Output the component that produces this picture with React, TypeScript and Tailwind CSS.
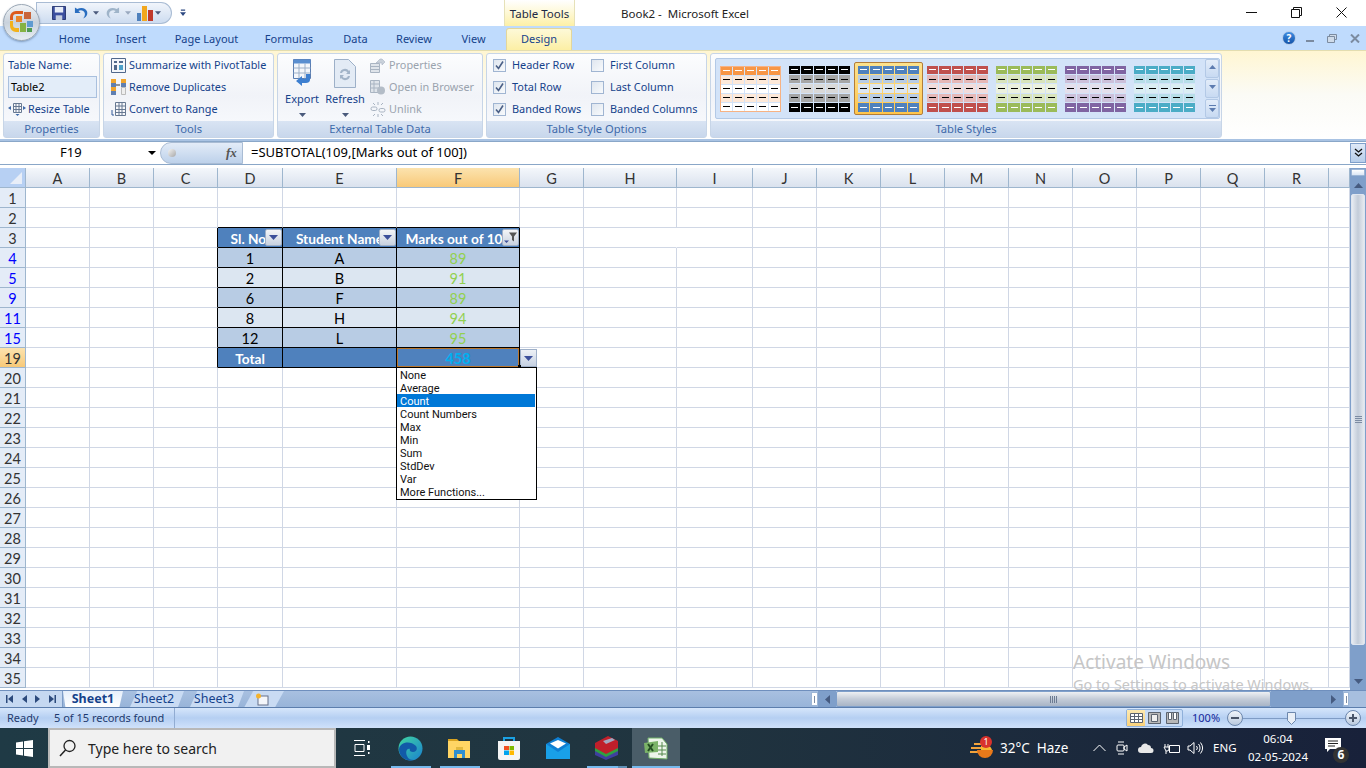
import React from "react";

const seg = "font-['Noto_Sans',sans-serif]";

const cols = ["A","B","C","D","E","F","G","H","I","J","K","L","M","N","O","P","Q","R",""];
const rows = [1,2,3,4,5,9,11,15,19,20,21,22,23,24,25,26,27,28,29,30,31,32,33,34,35];
const filtered = [4,5,9,11,15,19];

type Cell = { t: string; cls: string };
const band1 = "bg-[#b8cce4] text-black";
const band2 = "bg-[#dce6f1] text-black";
const head = "bg-[#4f81bd] text-white font-bold text-[13.7px]";
const mk = (a: string, b: string, c: string, bg: string): Cell[] => [
  { t: a, cls: bg }, { t: b, cls: bg }, { t: c, cls: bg.split(" ")[0] + " text-[#92d050]" },
];
const tableRows: Record<number, Cell[]> = {
  3: [{ t: "Sl. No.", cls: head }, { t: "Student Name", cls: head }, { t: "Marks out of 100", cls: head }],
  4: mk("1", "A", "89", band1),
  5: mk("2", "B", "91", band2),
  9: mk("6", "F", "89", band1),
  11: mk("8", "H", "94", band2),
  15: mk("12", "L", "95", band1),
  19: [{ t: "Total", cls: head }, { t: "", cls: head }, { t: "458", cls: "bg-[#4f81bd] text-[#00b0f0] font-bold" }],
};

function FilterBtn({ funnel }: { funnel?: boolean }) {
  return (
    <span className="absolute right-0 top-[1px] w-[17px] h-[17px] flex items-center justify-center bg-gradient-to-b from-[#f4f5f7] to-[#c9d2e0] border border-[#9fb0c8] rounded-[2px]">
      {funnel ? (
        <svg width="15" height="13" viewBox="0 0 15 13">
          <path d="M1 9.5h5l-2.5 2.5z" fill="#3c4f9a" />
          <path d="M6 1.5h8L11 5.5v5l-2-1.5V5.5z" fill="#555" />
        </svg>
      ) : (
        <svg width="9" height="5" viewBox="0 0 9 5"><path d="M0 0h9L4.5 5z" fill="#3c4f9a" /></svg>
      )}
    </span>
  );
}

function GridArea() {
  return (
    <div className="relative h-[522px] overflow-hidden bg-white">
      <div className="grid grid-cols-[26px_64px_64px_64px_65px_114px_123px_64px_93px_76px_64px_64px_64px_64px_64px_64px_64px_64px_64px_21px] auto-rows-[20px] font-['Lato',sans-serif] text-[14.5px] leading-[19px]">
        <div className="bg-[#b7d0f3] border-r border-b border-[#9eb6ce] flex items-end justify-end p-[3px]">
          <svg width="12" height="12" viewBox="0 0 12 12"><path d="M12 0v12H0z" fill="#e8eef8" /></svg>
        </div>
        {cols.map((c, i) => (
          <div key={"c" + i} className={`border-r border-b border-[#9eb6ce] pt-[1px] flex items-center justify-center text-[#333] ${c === "F" ? "bg-gradient-to-b from-[#fce3ae] to-[#f8c978]" : "bg-gradient-to-b from-[#f4f7fb] to-[#dae2ee]"}`}>
            {c}
          </div>
        ))}
        {rows.flatMap((r) => {
          const tr = tableRows[r];
          const rowHeaderCls = r === 19
            ? "bg-gradient-to-b from-[#fce3ae] to-[#f8c978] text-[#333]"
            : filtered.includes(r)
              ? "bg-[#e4ecf7] text-[#0000ff]"
              : "bg-[#e4ecf7] text-[#333]";
          const out = [
            <div key={`h${r}`} className={`border-r border-b border-[#9eb6ce] pt-[1px] flex items-center justify-center ${rowHeaderCls}`}>{r}</div>,
          ];
          cols.forEach((c, i) => {
            const key = `${r}-${i}`;
            const inTable = !!tr && i >= 3 && i <= 5;
            if (inTable) {
              const cell = tr[i - 3];
              const active = r === 19 && c === "F";
              out.push(
                <div key={key} className={`relative border-r border-b border-black pt-[1px] flex items-center justify-center overflow-hidden whitespace-nowrap ${cell.cls}`}>
                  {cell.t}
                  {r === 3 && <FilterBtn funnel={c === "F"} />}
                  {active && <span className="absolute inset-0 border border-[#b9762d]" />}
                </div>
              );
              return;
            }
            const rightBlack = !!tr && i === 2;
            const bottomBlack = r === 2 && i >= 3 && i <= 5;
            const noRight = r === 3 && c === "H";
            out.push(
              <div key={key} className={`border-r border-b ${rightBlack ? "border-r-black" : noRight ? "border-r-white" : "border-r-[#d0d7e5]"} ${bottomBlack ? "border-b-black" : "border-b-[#d0d7e5]"}`} />
            );
          });
          return out;
        })}
      </div>

      {/* Total-row drop-down */}
      <div className="absolute left-[520px] top-[181px] w-[17px] h-[18px] bg-gradient-to-b from-[#eef1f6] to-[#c6d1e2] border border-[#9fb0c8] flex items-center justify-center">
        <svg width="9" height="5" viewBox="0 0 9 5"><path d="M0 0h9L4.5 5z" fill="#3c4f9a" /></svg>
      </div>
      <span className="absolute left-[518px] top-[197px] w-[3px] h-[3px] bg-black" />
      <div className="absolute left-[396px] top-[199px] w-[141px] h-[133px] bg-white border border-black text-[11px] leading-[15px] text-[#111] font-['Roboto',sans-serif]">
        {["None","Average","Count","Count Numbers","Max","Min","Sum","StdDev","Var","More Functions..."].map((m) => (
          <div key={m} className={`h-[13px] w-[138px] pl-[3px] whitespace-nowrap ${m === "Count" ? "bg-[#0078d7] text-white" : ""}`}>{m}</div>
        ))}
      </div>

      {/* Activation watermark */}
      <div className={`absolute left-[1073px] top-[481px] text-[#c6c6c6] whitespace-nowrap ${seg}`}>
        <div className="text-[19px] leading-[26px]">Activate Windows</div>
        <div className="text-[14.5px] leading-[18px]">Go to Settings to activate Windows.</div>
      </div>
    </div>
  );
}

function VScroll() {
  return (
    <div className="w-[16px] h-[522px] bg-[#7f9fca] flex flex-col items-center">
      <div className="w-[14px] h-[7px] mt-[1px] bg-gradient-to-b from-white to-[#dbe6f5] border border-[#9db6d6] rounded-[1px]" />
      <div className="h-[18px] flex items-center justify-center">
        <svg width="9" height="5" viewBox="0 0 9 5"><path d="M4.5 0L9 5H0z" fill="#465b80" /></svg>
      </div>
      <div className="w-[14px] h-[451px] rounded-[2px] bg-gradient-to-r from-[#e8ecf2] via-[#c3ccd9] to-[#e6eaf0] border border-[#dfe6f0] flex items-center justify-center">
        <div className="w-[7px] flex flex-col gap-[1px]">
          {[0,1,2,3].map((i) => <span key={i} className="block h-[1px] bg-[#7d8ca3]" />)}
        </div>
      </div>
      <div className="flex-1 flex items-end pb-[6px]">
        <svg width="9" height="5" viewBox="0 0 9 5"><path d="M0 0h9L4.5 5z" fill="#465b80" /></svg>
      </div>
    </div>
  );
}

function SheetBar() {
  const tab = "h-[16px] flex items-center text-[12.5px] text-[#15428b]";
  return (
    <div className={`h-[17px] border-t border-[#6f8fbd] bg-gradient-to-b from-[#a8c0e0] to-[#98b4d9] flex items-stretch ${seg}`}>
      <div className="w-[63px] bg-[#c5d8f1] border-r border-[#7d9cc7] flex items-center justify-around px-[2px]">
        <svg width="7" height="8" viewBox="0 0 7 8"><path d="M0 0h1.5v8H0zM7 0v8L2 4z" fill="#2c4a7c" /></svg>
        <svg width="5" height="8" viewBox="0 0 5 8"><path d="M5 0v8L0 4z" fill="#2c4a7c" /></svg>
        <svg width="5" height="8" viewBox="0 0 5 8"><path d="M0 0v8l5-4z" fill="#2c4a7c" /></svg>
        <svg width="7" height="8" viewBox="0 0 7 8"><path d="M7 0H5.5v8H7zM0 0v8l5-4z" fill="#2c4a7c" /></svg>
      </div>
      <div className={`${tab} w-[60px] justify-center font-bold bg-gradient-to-b from-[#e6effb] to-white [clip-path:polygon(0_0,100%_0,94%_100%,4%_100%)]`}>Sheet1</div>
      <div className={`${tab} w-[60px] justify-center ml-[1px] bg-[#c9dbf3] [clip-path:polygon(10%_100%,22%_0,100%_0,90%_100%)]`}>Sheet2</div>
      <div className={`${tab} w-[60px] justify-center bg-[#c9dbf3] [clip-path:polygon(10%_100%,22%_0,100%_0,90%_100%)]`}>Sheet3</div>
      <div className={`${tab} w-[44px] justify-center -ml-[4px] bg-[#c9dbf3] [clip-path:polygon(10%_100%,30%_0,100%_0,80%_100%)]`}>
        <svg width="14" height="13" viewBox="0 0 14 13">
          <rect x="3" y="3" width="10" height="9" fill="#f4f6fa" stroke="#66708a" strokeWidth="1" />
          <circle cx="3.5" cy="3" r="2.5" fill="#f5b32d" />
        </svg>
      </div>
      <div className="w-[527px]" />
      <div className="w-[7px] my-[1px] bg-white border border-[#9db6d6] flex items-center justify-center"><span className="block w-[1px] h-[7px] bg-[#7d8ca3]" /></div>
      <div className="w-[18px] bg-[#7f9fca] flex items-center justify-center">
        <svg width="5" height="9" viewBox="0 0 5 9"><path d="M5 0v9L0 4.5z" fill="#465b80" /></svg>
      </div>
      <div className="w-[435px] bg-gradient-to-b from-[#eef0f3] via-[#c4ccd8] to-[#a9b5c6] border border-[#7f9fca] rounded-[2px] flex items-center justify-center">
        <div className="flex gap-[1px]">{[0,1,2,3].map((i) => <span key={i} className="block w-[1px] h-[7px] bg-[#6c7b92]" />)}</div>
      </div>
      <div className="w-[72px] bg-[#7f9fca] flex items-center justify-end pr-[7px]">
        <svg width="5" height="9" viewBox="0 0 5 9"><path d="M0 0v9l5-4.5z" fill="#465b80" /></svg>
      </div>
      <div className="w-[6px] my-[1px] bg-white border border-[#9db6d6] flex items-center justify-center"><span className="block w-[1px] h-[7px] bg-[#7d8ca3]" /></div>
      <div className="flex-1 bg-[#a7bfdf]" />
    </div>
  );
}

function StatusBar() {
  return (
    <div className={`h-[21px] bg-gradient-to-b from-[#d6e6fb] via-[#b5cff2] to-[#cfe1fa] border-t border-[#5c7ead] flex items-center text-[11px] text-[#1e3a6e] ${seg}`}>
      <span className="ml-[7px] w-[47px]">Ready</span>
      <span className="w-[120px] whitespace-nowrap">5 of 15 records found</span>
      <span className="block w-[1px] h-[20px] bg-[#91acd2]" />
      <div className="ml-[951px] w-[57px] h-[18px] border border-[#8fb0da] rounded-[2px] bg-[#c8dcf6] flex items-center">
        <span className="w-[19px] h-[16px] bg-gradient-to-b from-[#fde9b0] to-[#fbd27a] flex items-center justify-center">
          <svg width="13" height="10" viewBox="0 0 13 10"><path d="M.5.5h12v9H.5zM.5 3.5h12M.5 6.5h12M4.5.5v9M8.5.5v9" fill="#fff" stroke="#5c6470" /></svg>
        </span>
        <span className="w-[19px] h-[16px] flex items-center justify-center">
          <svg width="13" height="12" viewBox="0 0 13 12"><path d="M.5.5h12v11H.5z" fill="#b8b8b8" stroke="#5c6470" /><path d="M3.5 2.5h6v7h-6z" fill="#eee" stroke="#5c6470" /></svg>
        </span>
        <span className="w-[19px] h-[16px] flex items-center justify-center">
          <svg width="13" height="12" viewBox="0 0 13 12"><path d="M.5.5h12v11H.5z" fill="#b8b8b8" stroke="#5c6470" /><path d="M2.5.5h3v7h-3zM7.5.5h3v7h-3z" fill="#fff" stroke="#5c6470" /></svg>
        </span>
      </div>
      <span className="ml-[9px] w-[35px] text-[11px] text-[#15279b]">100%</span>
      <ZoomBtn minus />
      <div className="relative w-[102px] h-[1px] bg-[#7f9cc5] flex items-center">
        <svg className="absolute left-[44px] -top-[6px]" width="9" height="13" viewBox="0 0 9 13"><path d="M.5.5h8v8L4.5 12.5.5 8.5z" fill="#e8eef6" stroke="#6c87ad" /></svg>
      </div>
      <ZoomBtn />
    </div>
  );
}

function ZoomBtn({ minus }: { minus?: boolean }) {
  return (
    <span className="w-[16px] h-[16px] rounded-full bg-gradient-to-b from-[#f2f6fb] to-[#b9c9de] border border-[#6c87ad] flex items-center justify-center">
      <svg width="10" height="10" viewBox="0 0 10 10">
        <path d={minus ? "M1 4h8v2H1z" : "M1 4h3V1h2v3h3v2H6v3H4V6H1z"} fill="#4a5568" />
      </svg>
    </span>
  );
}

function Orb() {
  return (
    <div className="absolute left-[3px] top-[4px] w-[37px] h-[37px] rounded-full bg-gradient-to-b from-[#f2f5f8] via-[#c9d2dc] to-[#e7edf3] border border-[#9aa7b5] shadow-[0_1px_2px_rgba(60,90,130,.5)] flex items-center justify-center">
      <svg width="25" height="25" viewBox="0 0 25 25">
        <path d="M7 1h7v3H7a3 3 0 0 0-3 3v3H1V7a6 6 0 0 1 6-6z" fill="#dd5a1c" />
        <path d="M1 11h3v4a3 3 0 0 0 3 3h3v4H7a6 6 0 0 1-6-6z" fill="#f2b21c" />
        <path d="M7 6h6v6H7z" fill="#e9852a" />
        <path d="M15 2h7v7h-7z" fill="#c9653a" />
        <path d="M11 13h6v9h-6z" fill="#85b243" />
        <path d="M18 11h6v6h-6z" fill="#5f9bd0" />
        <path d="M18 18h5v4h-5z" fill="#4f9a52" />
      </svg>
    </div>
  );
}

function Qat() {
  return (
    <div className="ml-[36px] mt-[2px] w-[136px] h-[22px] rounded-r-full rounded-bl-[12px] border border-[#a9bcd4] bg-gradient-to-b from-[#f1f5fb] to-[#cddcf0] flex items-center pl-[15px] gap-[2px]">
      <svg width="14" height="14" viewBox="0 0 15 15">
        <path d="M.5.5h14v14H.5z" fill="#3b4f9f" stroke="#25346e" />
        <path d="M3 1h9v6H3z" fill="#e8edf7" />
        <path d="M4 10h7v5H4z" fill="#c6cfe0" />
      </svg>
      <svg className="ml-[6px]" width="14" height="14" viewBox="0 0 15 14">
        <path d="M1 1v6h6L4.7 4.8C7 3.3 10.5 4 11.500 7c.6 2-.3 4.500-2 6 3.500-1 5.500-4 4.500-7.500C13 2 8 .1 3.500 2.800z" fill="#2a6ec0" />
      </svg>
      <svg width="6" height="4" viewBox="0 0 7 4" className="ml-[3px]"><path d="M0 0h7L3.500 4z" fill="#4a5a7c" /></svg>
      <svg className="ml-[5px]" width="14" height="14" viewBox="0 0 15 14">
        <path d="M14 1v6H8l2.300-2.200C8 3.300 4.500 4 3.500 7c-.6 2 .3 4.500 2 6-3.500-1-5.500-4-4.500-7.500C2 2 7 .1 11.500 2.800z" fill="#9fb4c9" />
      </svg>
      <svg width="6" height="4" viewBox="0 0 7 4" className="ml-[3px]"><path d="M0 0h7L3.500 4z" fill="#9aa9bf" /></svg>
      <svg className="ml-[4px]" width="16" height="17" viewBox="0 0 16 17">
        <path d="M0 8h4v8H0z" fill="#4f81bd" />
        <path d="M5 1h5v15H5z" fill="#f2a71e" />
        <path d="M11 5h5v11h-5z" fill="#c0392b" />
      </svg>
      <svg width="6" height="4" viewBox="0 0 7 4"><path d="M0 0h7L3.500 4z" fill="#4a5a7c" /></svg>
    </div>
  );
}

function TitleBar() {
  return (
    <div className={`h-[26px] bg-white flex text-[11.5px] text-[#222] ${seg}`}>
      <Qat />
      <svg className="ml-[8px] mt-[9px]" width="6" height="8" viewBox="0 0 7 8"><path d="M1 0h5v1.500H1zM0 3h7L3.500 7.500z" fill="#2e4a82" /></svg>
      <div className="ml-[318px] w-[71px] h-[26px] pt-[2px] flex items-center justify-center bg-gradient-to-b from-white to-[#fdf0a6] border-x border-[#e6e1b8] whitespace-nowrap text-[#1d2a44]">Table Tools</div>
      <div className="ml-[46px] w-[127px] pt-[2px] flex items-center whitespace-nowrap">Book2 -&nbsp;&nbsp;Microsoft Excel</div>
      <div className="ml-auto flex items-center gap-[34px] pr-[19px] pb-[2px]">
        <svg width="11" height="11" viewBox="0 0 11 11"><path d="M0 5.500h11" stroke="#111" /></svg>
        <svg width="11" height="11" viewBox="0 0 11 11"><path d="M.5 2.500h8v8h-8zM2.500 2.500v-2h8v8h-2" fill="none" stroke="#111" /></svg>
        <svg width="11" height="11" viewBox="0 0 11 11"><path d="M.5.500l10 10M10.500.500l-10 10" stroke="#111" /></svg>
      </div>
    </div>
  );
}

function TabsRow() {
  const t = "flex items-center justify-center h-[24px] pt-[2px] whitespace-nowrap";
  return (
    <div className={`h-[24px] bg-[#bfdbfd] flex text-[11px] text-[#15428b] ${seg}`}>
      <span className="w-[52px]" />
      <span className={`${t} w-[45px]`}>Home</span>
      <span className={`${t} w-[68px]`}>Insert</span>
      <span className={`${t} w-[85px] ml-[-1px]`}>Page Layout</span>
      <span className={`${t} w-[80px]`}>Formulas</span>
      <span className={`${t} w-[53px]`}>Data</span>
      <span className={`${t} w-[64px]`}>Review</span>
      <span className={`${t} w-[55px]`}>View</span>
      <span className="flex items-center justify-center whitespace-nowrap w-[66px] ml-[5px] mt-[2px] h-[22px] rounded-t-[3px] bg-gradient-to-b from-[#fdf9d8] to-[#fcefa4] border-x border-t border-[#e3d69b]">Design</span>
      <div className="ml-auto flex items-center gap-[9px] pr-[6px]">
        <span className="w-[14px] h-[14px] rounded-full bg-gradient-to-b from-[#3f8ee4] to-[#1453a8] border border-[#b8cde8] text-white text-[10px] font-bold flex items-center justify-center leading-none">?</span>
        <svg className="ml-[1px]" width="8" height="8" viewBox="0 0 8 8"><path d="M0 6h8v2H0z" fill="#7b8ba0" /></svg>
        <svg className="ml-[4px]" width="10" height="9" viewBox="0 0 10 9"><path d="M.5 2.500h7v6h-7zM2.500 2.500v-2h7v5h-2" fill="#cfdbe9" stroke="#7b8ba0" /></svg>
        <svg className="ml-[4px]" width="10" height="9" viewBox="0 0 10 9"><path d="M1 .5l8 8M9 .5l-8 8" stroke="#7b8ba0" strokeWidth="2" /></svg>
      </div>
    </div>
  );
}

function Group({ w, label, children }: { w: string; label: string; children: React.ReactNode }) {
  return (
    <div className={`${w} h-[85px] rounded-[3px] border border-[#c7d5e7] bg-gradient-to-b from-[#fcfdfe] via-[#f1f3f8] to-[#f9fbfe] flex flex-col`}>
      <div className="flex-1 min-h-0 flex">{children}</div>
      <div className="h-[16px] bg-gradient-to-b from-[#d9e4f3] to-[#c8d7ec] text-[11.2px] leading-[16px] text-center text-[#3e6aaa] whitespace-nowrap overflow-hidden">{label}</div>
    </div>
  );
}

function Ic({ kind, dim }: { kind: string; dim?: boolean }) {
  const s = dim ? "#a9b4c2" : "#51688b";
  if (kind === "pivot") return <svg width="15" height="15" viewBox="0 0 15 15"><path d="M.5.5h14v14H.5z" fill="#f4f6fa" stroke={s} /><path d="M3 3h3v2H3zM8 3h4v2H8zM3 7h3v5H3z" fill={s} /><path d="M8 7h4v5H8z" fill="#4ea0c9" /></svg>;
  if (kind === "dup") return <svg width="15" height="16" viewBox="0 0 15 16"><path d="M0 0h5v4H0z" fill="#f0a52d" /><path d="M0 4h5v4H0z" fill="#5f7fb1" /><path d="M0 8h5v4H0z" fill="#f0a52d" /><path d="M0 12h5v4H0z" fill="#5f7fb1" /><path d="M10 0h5v4h-5z" fill="#f0a52d" /><path d="M10 4h5v4h-5z" fill="#5f7fb1" /><path d="M10.500 8.500h4v7h-4z" fill="#eee" stroke="#bbb" /><path d="M5 6h4" stroke="#333" /></svg>;
  if (kind === "conv") return <svg width="15" height="16" viewBox="0 0 15 16"><path d="M4.500 1.500h10v13h-10zM4.500 5h10M4.500 8.500h10M4.500 11.500h10M8 1.500v13M11 1.500v13" fill="#f7f8fb" stroke="#677992" /><path d="M1 9v5h2" stroke="#335a9a" fill="none" /></svg>;
  if (kind === "resize") return <svg width="18" height="14" viewBox="0 0 18 14"><path d="M5.500 1.500h8v9h-8zM5.500 4.500h8M5.500 7.500h8M8 1.500v9M11 1.500v9" fill="#f7f8fb" stroke="#677992" /><path d="M0 6l3-2v4zM18 6l-3-2v4zM9.500 14l-2-2h4z" fill="#3e6aaa" /></svg>;
  if (kind === "prop") return <svg width="16" height="15" viewBox="0 0 16 15"><path d="M.5 5.500h9v9h-9zM.5 8.500h9M.5 11.500h9" fill="#dfe4ea" stroke={s} /><path d="M6 5l4-4h2l3 3-3 3V5H8z" fill="#c9d1da" stroke={s} strokeWidth=".6" /></svg>;
  if (kind === "open") return <svg width="16" height="15" viewBox="0 0 16 15"><path d="M.5.5h9v12h-9zM.5 4h9M.5 8h9M4 .5v12" fill="#dfe4ea" stroke={s} /><circle cx="11" cy="10.500" r="4" fill="#b3bcc7" /></svg>;
  return <svg width="16" height="15" viewBox="0 0 16 15"><rect x="1" y="5" width="6" height="3.500" rx="1.700" fill="none" stroke={s} /><rect x="9" y="6.500" width="6" height="3.500" rx="1.700" fill="none" stroke={s} /><path d="M8 0v3M8 12v3M3 1l2 2M13 14l-2-2M13 1l-2 2M3 14l2-2" stroke={s} /></svg>;
}

function RowItem({ icon, label, dim }: { icon: string; label: string; dim?: boolean }) {
  return (
    <div className={`h-[22px] flex items-center whitespace-nowrap text-[10.85px] ${dim ? "text-[#9aa3ae]" : "text-[#15428b]"}`}>
      <span className="w-[18px] flex justify-center mr-[2px]"><Ic kind={icon} dim={dim} /></span>
      {label}
    </div>
  );
}

function Check({ on, label }: { on?: boolean; label: string }) {
  return (
    <div className="h-[22px] flex items-center whitespace-nowrap text-[10.9px] text-[#15428b]">
      <span className="w-[13px] h-[13px] mr-[6px] border border-[#a0b5d2] bg-gradient-to-br from-[#dfe6ef] to-[#f8fafc] flex items-center justify-center">
        {on && <svg width="9" height="9" viewBox="0 0 9 9"><path d="M1 4.500l2.500 3L8 .500" fill="none" stroke="#4a5f86" strokeWidth="1.600" /></svg>}
      </span>
      {label}
    </div>
  );
}

const bands: Record<string, { s: string; b: string; w: string }> = {
  orange: { s: "bg-[#f79646]", b: "bg-[#fde9d9]", w: "bg-white" },
  black: { s: "bg-black", b: "bg-[#a6a6a6]", w: "bg-[#d9d9d9]" },
  blue: { s: "bg-[#4f81bd]", b: "bg-[#b8cce4]", w: "bg-[#dce6f1]" },
  red: { s: "bg-[#c0504d]", b: "bg-[#e6b8b7]", w: "bg-[#f2dcdb]" },
  green: { s: "bg-[#9bbb59]", b: "bg-[#d8e4bc]", w: "bg-[#ebf1de]" },
  purple: { s: "bg-[#8064a2]", b: "bg-[#ccc0da]", w: "bg-[#e4dfec]" },
  teal: { s: "bg-[#4bacc6]", b: "bg-[#b7dee8]", w: "bg-[#daeef3]" },
};

function Thumb({ name }: { name: string }) {
  const c = bands[name];
  const orange = name === "orange";
  const rowsDef = [
    { bg: c.s, d: "bg-white" },
    { bg: c.b, d: "bg-black" },
    { bg: c.w, d: "bg-black" },
    { bg: c.b, d: "bg-black" },
    { bg: orange ? "bg-white" : c.s, d: orange ? "bg-black" : "bg-white" },
  ];
  return (
    <div className={`w-[61px] h-[46px] flex flex-col gap-[1px] ${orange ? "border border-[#f7b283]" : ""}`}>
      {rowsDef.map((r, i) => (
        <div key={i} className="flex-1 flex gap-[1px]">
          {[0,1,2,3,4].map((j) => (
            <div key={j} className={`flex-1 ${r.bg} flex items-center justify-center`}>
              <span className={`block w-[7px] h-[1px] ${r.d}`} />
            </div>
          ))}
        </div>
      ))}
    </div>
  );
}

function Ribbon() {
  return (
    <div className={`h-[89px] bg-gradient-to-b from-[#fff6d2] via-[#fbfbf6] to-[#ffffff] flex gap-[3px] pl-[3px] pt-[2px] text-[#15428b] border-t border-[#e3ddb0] ${seg}`}>
      <Group w="w-[97px]" label="Properties">
        <div className="pl-[4px] text-[11px]">
          <div className="h-[22px] flex items-center whitespace-nowrap">Table Name:</div>
          <div className="w-[89px] h-[22px] bg-[#e3edf9] border border-[#a9c0de] text-black flex items-center pl-[2px]">Table2</div>
          <RowItem icon="resize" label="Resize Table" />
        </div>
      </Group>
      <Group w="w-[171px]" label="Tools">
        <div className="pl-[5px]">
          <RowItem icon="pivot" label="Summarize with PivotTable" />
          <RowItem icon="dup" label="Remove Duplicates" />
          <RowItem icon="conv" label="Convert to Range" />
        </div>
      </Group>
      <Group w="w-[206px]" label="External Table Data">
        <div className="w-[46px] ml-[1px] flex flex-col items-center pt-[5px] text-[11px]">
          <svg width="22" height="30" viewBox="0 0 22 30">
            <path d="M2.500.5h17v19h-17z" fill="#f4f7fb" stroke="#5a7db0" />
            <path d="M2.500.5h17v4h-17z" fill="#5a8fd0" />
            <path d="M2.500 9h17M2.500 14h17M8 4.500v15M14 4.500v15" stroke="#9db0c8" />
            <path d="M19 15v6c0 2-2 3-4 3h-4v3l-6-5 6-5v3h3c1 0 1-1 1-1v-4z" fill="#3d7fd0" />
          </svg>
          <span className="mt-[3px] leading-[14px]">Export</span>
          <svg className="mt-[7px]" width="7" height="4" viewBox="0 0 7 4"><path d="M0 0h7L3.500 4z" fill="#4a5a7c" /></svg>
        </div>
        <div className="w-[40px] flex flex-col items-center pt-[5px] text-[11px]">
          <svg width="22" height="30" viewBox="0 0 22 30">
            <path d="M.5.5h14l7 7v21H.5z" fill="#e3ebf5" stroke="#9db0c8" />
            <path d="M6 14a5 5 0 0 1 9-2l1-1v4h-4l1.500-1.500A3 3 0 0 0 8 14zM16 17a5 5 0 0 1-9 2l-1 1v-4h4l-1.500 1.500A3 3 0 0 0 14 17z" fill="#a2b4c8" />
          </svg>
          <span className="mt-[3px] leading-[14px]">Refresh</span>
          <svg className="mt-[7px]" width="7" height="4" viewBox="0 0 7 4"><path d="M0 0h7L3.500 4z" fill="#4a5a7c" /></svg>
        </div>
        <div className="ml-[4px]">
          <RowItem icon="prop" label="Properties" dim />
          <RowItem icon="open" label="Open in Browser" dim />
          <RowItem icon="unlink" label="Unlink" dim />
        </div>
      </Group>
      <Group w="w-[221px]" label="Table Style Options">
        <div className="pl-[6px] w-[104px]">
          <Check on label="Header Row" />
          <Check on label="Total Row" />
          <Check on label="Banded Rows" />
        </div>
        <div>
          <Check label="First Column" />
          <Check label="Last Column" />
          <Check label="Banded Columns" />
        </div>
      </Group>
      <Group w="w-[512px]" label="Table Styles">
        <div className="ml-[4px] mt-[4px] h-[61px] w-[505px] bg-[#d3e3f8] border border-[#b3c9e6] rounded-[2px] flex items-center">
          <div className="flex-1 flex items-center pl-[4px]">
            <Thumb name="orange" />
            <div className="ml-[8px]"><Thumb name="black" /></div>
            <div className="ml-[4px] p-[3px] w-[69px] h-[53px] border border-[#b27d39] rounded-[2px] bg-gradient-to-b from-[#fde28d] to-[#ffc54a] flex items-center justify-center">
              <Thumb name="blue" />
            </div>
            <div className="ml-[4px]"><Thumb name="red" /></div>
            <div className="ml-[8px]"><Thumb name="green" /></div>
            <div className="ml-[8px]"><Thumb name="purple" /></div>
            <div className="ml-[8px]"><Thumb name="teal" /></div>
          </div>
          <div className="w-[14px] h-[59px] flex flex-col gap-[1px]">
            {["M0 4L3.500 0 7 4z", "M0 0h7L3.500 4z", "M0 0h7v1H0zM0 3h7L3.500 7z"].map((d, i) => (
              <div key={i} className="flex-1 bg-gradient-to-b from-[#e2ecf9] to-[#c8daf2] border border-[#b3c9e6] rounded-[2px] flex items-center justify-center">
                <svg width="7" height="7" viewBox="0 0 7 7"><path d={d} fill="#5d7cb0" /></svg>
              </div>
            ))}
          </div>
        </div>
      </Group>
    </div>
  );
}

function FormulaBar() {
  return (
    <div className={`h-[29px] flex flex-col bg-white ${seg}`}>
      <div className="h-[3px] bg-[#a9c3e3] border-b border-[#8aa7c8]" />
      <div className="h-[22px] flex items-center bg-white">
        <div className="w-[158px] h-[22px] flex items-center text-[13px] text-black">
          <span className="ml-[60px] w-[88px]">F19</span>
          <svg width="8" height="4" viewBox="0 0 8 4"><path d="M0 0h8L4 4z" fill="#000" /></svg>
        </div>
        <div className="ml-[2px] w-[83px] h-[22px] rounded-l-full bg-gradient-to-b from-[#e3ecf8] to-[#bdd1ea] border border-[#a9bcd4] flex items-center">
          <span className="ml-[7px] w-[8px] h-[8px] rounded-full bg-gradient-to-br from-[#f4f4f4] to-[#a8a8a8]" />
          <span className="ml-[50px] text-[13px] italic font-bold text-[#555] font-['Liberation_Serif',serif]">fx</span>
        </div>
        <div className="w-[1107px] h-[22px] flex items-center pl-[8px] text-[13px] text-black whitespace-nowrap">=SUBTOTAL(109,[Marks out of 100])</div>
        <div className="w-[16px] h-[20px] bg-gradient-to-b from-[#dfe9f7] to-[#b6cdea] border border-[#7f9fca] flex items-center justify-center">
          <svg width="9" height="10" viewBox="0 0 9 10"><path d="M1 1l3.500 3L8 1M1 5l3.500 3L8 5" fill="none" stroke="#111" strokeWidth="1.300" /></svg>
        </div>
      </div>
      <div className="h-[4px] border-t border-[#8aa7c8] bg-white" />
    </div>
  );
}

function TaskIcon({ children, underline, extra }: { children: React.ReactNode; underline?: string; extra?: boolean }) {
  return (
    <div className="relative w-[49px] flex items-center justify-center">
      {children}
      {underline && (
        <span className={`absolute bottom-0 left-[5px] h-[2px] ${underline} bg-[#76b9ed]`} />
      )}
      {extra && <span className="absolute bottom-0 left-[36px] h-[2px] w-[9px] bg-[#5f8fb5]" />}
    </div>
  );
}

function Taskbar() {
  return (
    <div className={`h-[40px] bg-gradient-to-r from-[#1f3a45] via-[#20343f] to-[#18213a] flex items-stretch text-white ${seg}`}>
      <div className="w-[48px] flex items-center justify-center">
        <svg width="17" height="17" viewBox="0 0 17 17"><path d="M0 2.400l7-1V8H0zM8 1.200L17 0v8H8zM0 9h7v6.600l-7-1zM8 9h9v8l-9-1.200z" fill="#fff" /></svg>
      </div>
      <div className="w-[288px] h-[40px] bg-[#f1f1f1] border-2 border-[#b8b8b8] flex items-center text-[#222]">
        <svg className="ml-[9px]" width="18" height="18" viewBox="0 0 18 18"><circle cx="10.500" cy="7" r="5.500" fill="none" stroke="#222" strokeWidth="1.300" /><path d="M6.500 11L1 17" stroke="#222" strokeWidth="1.500" /></svg>
        <span className="ml-[11px] text-[14px] whitespace-nowrap">Type here to search</span>
      </div>
      <div className="w-[50px] flex items-center justify-center">
        <svg width="17" height="16" viewBox="0 0 17 16"><path d="M1 .5h11M1 15.500h11M2 4.500h9v7H2z" fill="none" stroke="#fff" /><path d="M15 1h1.500v2H15zM14 5h3v5h-3zM15 12h1.500v2H15z" fill="#fff" /></svg>
      </div>
      <TaskIcon underline="w-[40px]"><svg width="25" height="25" viewBox="0 0 25 25"><defs><linearGradient id="edg" x1="0" y1="0" x2="1" y2="1"><stop offset="0" stopColor="#40d6a0" /><stop offset="1" stopColor="#1a80d0" /></linearGradient></defs><circle cx="12.500" cy="12.500" r="12" fill="url(#edg)" /><path d="M1 13C2 6 12 4 18 10c2 3 0 6-3 6-2 0-4-1-3-3-3-1-5 3-3 7 1 3 4 4 7 4-8 2-15-3-15-11z" fill="#125aa8" /></svg></TaskIcon>
      <TaskIcon underline="w-[40px]"><svg width="23" height="20" viewBox="0 0 23 20"><path d="M0 1h9l2 2H0z" fill="#d9a320" /><path d="M0 3h22v17H0z" fill="#ffd564" /><path d="M6 12h11v8h-3v-4H9v4H6z" fill="#2f8fd0" /><path d="M8 9h7v3H8z" fill="#e2b93f" /></svg></TaskIcon>
      <TaskIcon><svg width="24" height="25" viewBox="0 0 24 25"><path d="M7 5V2h10v3" fill="none" stroke="#1ba1e2" strokeWidth="2" /><path d="M1 5h22v17a2 2 0 0 1-2 2H3a2 2 0 0 1-2-2z" fill="#f5f5f5" /><path d="M7 10h5v4H7z" fill="#f25022" /><path d="M12.500 10H17v4h-4.500z" fill="#7fba00" /><path d="M7 14.500h5V19H7z" fill="#00a4ef" /><path d="M12.500 14.500H17V19h-4.500z" fill="#ffb900" /></svg></TaskIcon>
      <TaskIcon><svg width="24" height="24" viewBox="0 0 24 24"><path d="M0 8L12 1l12 7v15H0z" fill="#0e7fd3" /><path d="M0 8l12 8 12-8v15H0z" fill="#19a0e8" /><path d="M4 7.500L12 4l8 3.500-8 5z" fill="#fff" /></svg></TaskIcon>
      <TaskIcon underline="w-[31px]" extra><svg width="25" height="24" viewBox="0 0 25 24"><path d="M1 14l11 6 12-6v5l-12 5-11-5z" fill="#3f3f9f" /><path d="M1 11l11 6 12-6v4l-12 6-11-6z" fill="#30a040" /><path d="M1 7l13-7 10 5v7l-12 6-11-6z" fill="#c01f2a" /><path d="M9 5l9-3 3 2-9 4z" fill="#a3a8c0" /></svg></TaskIcon>
      <div className="relative w-[48px] ml-[1px] bg-[#4a5d68] flex items-center justify-center">
        <svg width="24" height="23" viewBox="0 0 24 23">
          <path d="M4 1h14l5 6v15l-18-1z" fill="#edf5ea" stroke="#6fae66" />
          <path d="M0 6l14-2v11L1 16z" fill="#7bb368" />
          <path d="M4 7l5 7M9 7l-5 7" stroke="#234d22" strokeWidth="2" />
          <path d="M14 9h8M14 13h8M14 17h8M18 5v14" stroke="#54884d" />
        </svg>
        <span className="absolute bottom-0 left-0 right-0 h-[2px] bg-[#76b9ed]" />
      </div>
      <div className="w-[283px]" />
      <div className="w-[35px] flex items-center justify-center relative">
        <svg className="mt-[3px]" width="24" height="20" viewBox="0 0 24 20"><path d="M5 4h12M2 8h10M1 12h10" stroke="#f2a33c" strokeWidth="2" /><path d="M8 10h16a8 8 0 0 1-16 0z" fill="#e8791a" /><path d="M12 6a7 7 0 0 1 11 4H12z" fill="#f7b733" /></svg>
        <span className="absolute left-[17px] top-[8px] w-[12px] h-[12px] rounded-full bg-[#d9322c] text-[9px] leading-[12px] text-center">1</span>
      </div>
      <div className="flex items-center text-[13.5px] whitespace-nowrap w-[79px] ml-[2px]">32°C&nbsp;&nbsp;Haze</div>
      <div className="w-[24px] ml-[8px] flex items-center justify-center">
        <svg width="13" height="8" viewBox="0 0 13 8"><path d="M.5 7l6-6 6 6" fill="none" stroke="#fff" /></svg>
      </div>
      <div className="w-[22px] flex items-center justify-center">
        <svg width="12" height="16" viewBox="0 0 12 16"><rect x="1" y="5" width="7" height="6" rx="1" fill="none" stroke="#fff" /><path d="M8 7l3-2v6L8 9zM2 2h6M2 14h6" fill="none" stroke="#fff" /></svg>
      </div>
      <div className="w-[26px] flex items-center justify-center">
        <svg width="16" height="10" viewBox="0 0 16 10"><path d="M3 10a3 3 0 0 1 0-6 4 4 0 0 1 7-2 3 3 0 0 1 3 3 2.500 2.500 0 0 1 0 5z" fill="#e8e8e8" /></svg>
      </div>
      <div className="w-[24px] flex items-center justify-center">
        <svg width="17" height="11" viewBox="0 0 17 11"><path d="M6.500 2.500h10v7h-10zM2 1v3M5 1v3M1 4h5v2a2 2 0 0 1-2 2H3zM3 8v3" fill="none" stroke="#fff" /></svg>
      </div>
      <div className="w-[24px] flex items-center justify-center">
        <svg width="17" height="14" viewBox="0 0 17 14"><path d="M1 5h2l4-3.500v11L3 9H1z" fill="none" stroke="#fff" /><path d="M9.500 5a3 3 0 0 1 0 4M11.500 3a6 6 0 0 1 0 8M13.500 1.500a9 9 0 0 1 0 11" fill="none" stroke="#fff" /></svg>
      </div>
      <div className="w-[29px] ml-[6px] flex items-center text-[11.5px]">ENG</div>
      <div className="w-[72px] flex flex-col items-center justify-center text-[11.5px] leading-[18px]">
        <span>06:04</span>
        <span>02-05-2024</span>
      </div>
      <div className="relative w-[30px] ml-[4px] flex items-center justify-center">
        <svg className="-mt-[6px]" width="16" height="15" viewBox="0 0 16 15"><path d="M0 0h16v11H5l-3 3v-3H0z" fill="#fff" /><path d="M3 3h10M3 5.500h10M3 8h7" stroke="#222" /></svg>
        <span className="absolute left-[15px] top-[19px] w-[16px] h-[16px] rounded-full bg-[#333] text-[12px] leading-[16px] text-center font-bold">6</span>
      </div>
    </div>
  );
}

export default function App() {
  return (
    <div className="relative w-[1366px] h-[768px] overflow-hidden bg-white">
      <TitleBar />
      <TabsRow />
      <Ribbon />
      <FormulaBar />
      <div className="flex">
        <div className="w-[1350px]"><GridArea /></div>
        <VScroll />
      </div>
      <SheetBar />
      <StatusBar />
      <Taskbar />
      <Orb />
    </div>
  );
}
